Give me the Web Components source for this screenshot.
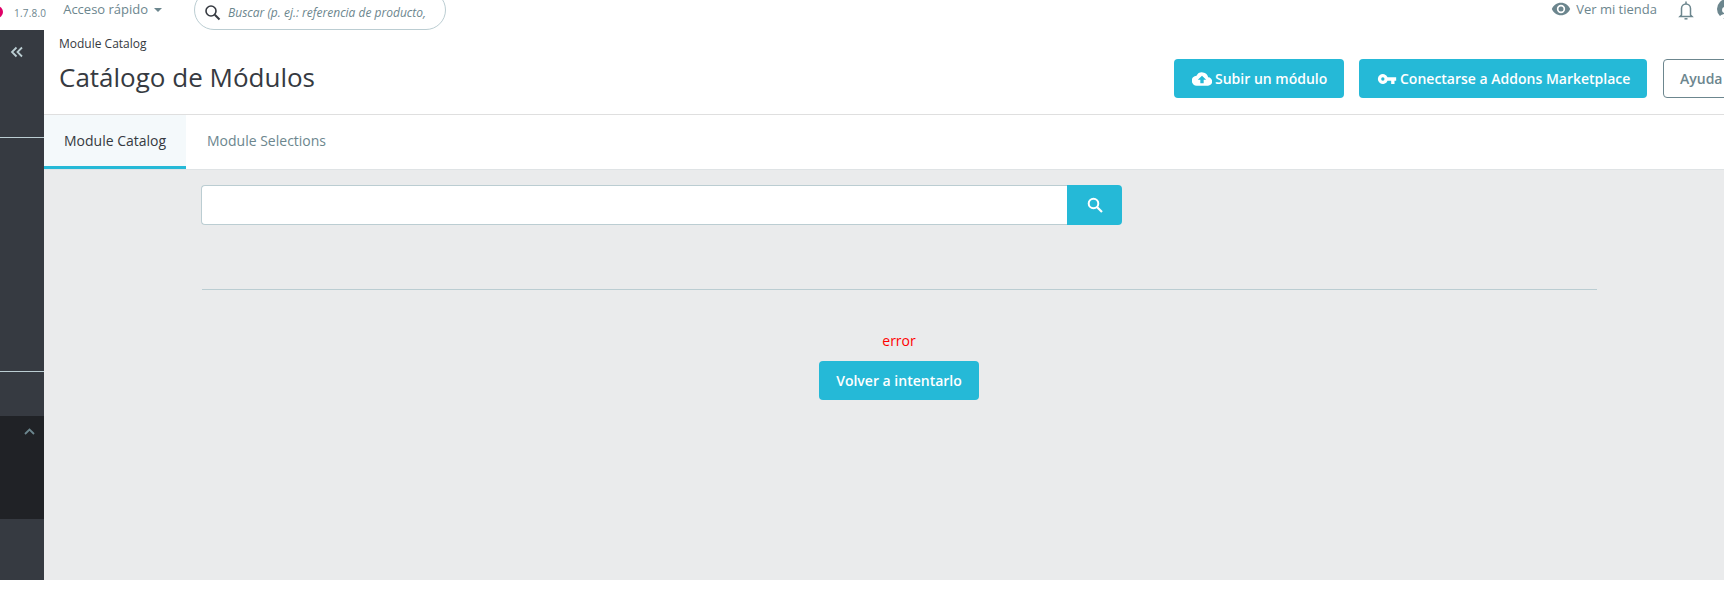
<!DOCTYPE html>
<html lang="es">
<head>
<meta charset="utf-8">
<title>Catálogo de Módulos</title>
<style>
  html, body { margin: 0; padding: 0; height: 600px; overflow: hidden; background: #fff; }
  body { font-family: "Open Sans", "Liberation Sans", sans-serif; color: #363a41; }
</style>
</head>
<body>
<bo-page>
  <bo-topbar slot="top"></bo-topbar>
  <bo-sidebar slot="side"></bo-sidebar>
  <bo-header></bo-header>
  <bo-tabs></bo-tabs>
  <bo-catalog></bo-catalog>
</bo-page>

<script>
// Shared primary button styles
const buttonCss = `
  .btn {
    display: inline-flex;
    align-items: center;
    justify-content: center;
    box-sizing: border-box;
    height: 39px;
    border: 0;
    border-radius: 4px;
    background: #25b9d7;
    color: #fff;
    font: 600 14px "Open Sans", sans-serif;
    white-space: nowrap;
  }
  .btn svg { display: block; fill: currentColor; flex: none; }
`;

class BoPage extends HTMLElement {
  constructor() {
    super();
    this.attachShadow({ mode: "open" });
    this.shadowRoot.innerHTML = `
      <style>
        :host { display: block; width: 1724px; height: 580px; }
        .layout { display: grid; grid-template-columns: 44px 1680px; grid-template-rows: 30px 550px; height: 580px; }
        .top { grid-column: 1 / 3; }
        .main { display: flex; flex-direction: column; min-width: 0; background: #eaebec; }
      </style>
      <div class="layout">
        <div class="top"><slot name="top"></slot></div>
        <slot name="side"></slot>
        <div class="main"><slot></slot></div>
      </div>
    `;
  }
}

class BoTopbar extends HTMLElement {
  constructor() {
    super();
    this.attachShadow({ mode: "open" });
    this.shadowRoot.innerHTML = `
      <style>
        :host { display: block; height: 30px; background: #fff; overflow: hidden; }
        .bar { display: flex; align-items: flex-start; height: 30px; }
        .logo { width: 12px; height: 12px; margin: 6px 0 0 -9px; border-radius: 50%; background: #df0067; flex: none; }
        .version { margin: 5px 0 0 11px; font-size: 10px; line-height: 16px; letter-spacing: .2px; color: #6c868e; white-space: nowrap; }
        .quick { display: flex; align-items: center; margin: 0 0 0 17px; font-size: 13px; line-height: 18px; color: #6c868e; white-space: nowrap; }
        .caret { width: 0; height: 0; margin: 2px 0 0 6px; border: 4px solid transparent; border-top-color: #6c868e; border-bottom: 0; }
        .search { display: flex; align-items: center; box-sizing: border-box; flex: none; width: 252px; height: 40px; margin: -10px 0 0 32px; padding: 5px 0 0 9px; border: 1px solid #bbcdd2; border-radius: 20px; }
        .search svg { flex: none; width: 17px; height: 17px; }
        .search span { margin-left: 7px; font-size: 12px; font-style: italic; color: #6c868e; white-space: nowrap; }
        .right { display: flex; align-items: flex-start; margin: 0 -13px 0 auto; }
        .shop { display: flex; align-items: center; height: 18px; font-size: 13px; color: #6c868e; white-space: nowrap; }
        .shop svg { width: 20px; height: 20px; margin-right: 5px; fill: #6c868e; }
        .bell { flex: none; width: 20px; height: 20px; margin: 0 0 0 19px; fill: none; stroke: #6c868e; stroke-width: 1.5; }
        .avatar { flex: none; display: block; width: 20px; height: 20px; margin: -1px 0 0 21px; }
      </style>
      <div class="bar">
        <div class="logo"></div>
        <div class="version">1.7.8.0</div>
        <div class="quick">Acceso rápido<span class="caret"></span></div>
        <div class="search">
          <svg viewBox="0 0 17 17"><circle cx="7" cy="7" r="5" fill="none" stroke="#363a41" stroke-width="1.6"/><path d="M10.800 10.800 15.500 15.500" stroke="#363a41" stroke-width="2"/></svg>
          <span>Buscar (p. ej.: referencia de producto,</span>
        </div>
        <div class="right">
          <div class="shop">
            <svg viewBox="0 0 24 24"><path d="M12 4.500C7 4.500 2.700 7.600 1 12c1.700 4.400 6 7.500 11 7.500s9.300-3.100 11-7.500c-1.700-4.400-6-7.500-11-7.500zM12 17a5 5 0 1 1 0-10 5 5 0 0 1 0 10zm0-8a3 3 0 1 0 0 6 3 3 0 0 0 0-6z"/></svg>
            Ver mi tienda
          </div>
          <svg class="bell" viewBox="0 0 20 20"><path d="M5.500 15V8.500a4.500 4.500 0 0 1 9 0V15l1.500 1.500H4z"/><path d="M8.500 18.800h3" /><path d="M10 1.500V4"/></svg>
          <svg class="avatar" viewBox="0 0 20 20"><circle cx="10" cy="10" r="10" fill="#6c868e"/><circle cx="8" cy="11" r="3" fill="#fff"/><path d="M2 19c1-3 4-4 6-4s5 1 6 4z" fill="#fff"/></svg>
        </div>
      </div>
    `;
  }
}

class BoSidebar extends HTMLElement {
  constructor() {
    super();
    this.attachShadow({ mode: "open" });
    this.shadowRoot.innerHTML = `
      <style>
        :host { display: block; background: #363a41; }
        .side { display: flex; flex-direction: column; height: 550px; box-sizing: border-box; }
        .collapse { height: 108px; padding: 16px 0 0 10px; box-sizing: border-box; border-bottom: 1px solid #bbcdd2; flex: none; }
        .collapse svg { display: block; width: 14px; height: 12px; }
        .block { height: 234px; box-sizing: border-box; border-bottom: 1px solid #bbcdd2; flex: none; }
        .gap { height: 44px; flex: none; }
        .dark { height: 103px; background: #202226; flex: none; padding: 12px 0 0 24px; box-sizing: border-box; }
        .dark svg { display: block; width: 11px; height: 7px; }
      </style>
      <div class="side">
        <div class="collapse">
          <svg viewBox="0 0 14 12" fill="none" stroke="#bbcdd2" stroke-width="1.8"><path d="M6.500 1.500 2 6l4.500 4.500M12 1.500 7.500 6l4.500 4.500"/></svg>
        </div>
        <div class="block"></div>
        <div class="gap"></div>
        <div class="dark">
          <svg viewBox="0 0 11 7" fill="none" stroke="#6c868e" stroke-width="1.8"><path d="M1 6 5.500 1.500 10 6"/></svg>
        </div>
      </div>
    `;
  }
}

class BoHeader extends HTMLElement {
  constructor() {
    super();
    this.attachShadow({ mode: "open" });
    this.shadowRoot.innerHTML = `
      <style>
        ${buttonCss}
        :host { display: block; flex: none; height: 85px; box-sizing: border-box; background: #fff; border-bottom: 1px solid #dfdfdf; }
        .wrap { display: flex; justify-content: space-between; align-items: flex-start; height: 84px; padding-left: 15px; }
        .crumb { margin-top: 6px; font-size: 12px; line-height: 16px; color: #363a41; white-space: nowrap; }
        h1 { margin: 7px 0 0; font-size: 26px; font-weight: 400; line-height: 36px; color: #363a41; white-space: nowrap; }
        .actions { display: flex; flex: none; margin: 29px -46px 0 0; }
        .upload { width: 170px; margin-right: 15px; justify-content: flex-start; padding-left: 18px; }
        .connect { width: 288px; margin-right: 16px; justify-content: flex-start; padding-left: 18px; }
        .upload span, .connect span { margin-left: 3px; }
        .help { width: 107px; background: #fff; color: #6c868e; border: 1px solid #6c868e; justify-content: flex-start; padding-left: 16px; }
      </style>
      <div class="wrap">
        <div>
          <div class="crumb">Module Catalog</div>
          <h1>Catálogo de Módulos</h1>
        </div>
        <div class="actions">
          <div class="btn upload">
            <svg width="20" height="20" viewBox="0 0 24 24"><path d="M19.400 10A7.500 7.500 0 0 0 5.400 8 6 6 0 0 0 6 20h13a5 5 0 0 0 .4-10zM14 13v4h-4v-4H7l5-5 5 5z"/></svg>
            <span>Subir un módulo</span>
          </div>
          <div class="btn connect">
            <svg width="20" height="20" viewBox="0 0 24 24"><path d="M12.650 10A6 6 0 1 0 12.650 14H17v4h4v-4h2v-4zM7 14a2 2 0 1 1 0-4 2 2 0 0 1 0 4z"/></svg>
            <span>Conectarse a Addons Marketplace</span>
          </div>
          <div class="btn help">Ayuda</div>
        </div>
      </div>
    `;
  }
}

class BoTabs extends HTMLElement {
  constructor() {
    super();
    this.attachShadow({ mode: "open" });
    this.shadowRoot.innerHTML = `
      <style>
        :host { display: block; flex: none; height: 55px; box-sizing: border-box; background: #fff; border-bottom: 1px solid #dfe3e5; }
        .tabs { display: flex; height: 54px; }
        .tab { display: flex; align-items: center; box-sizing: border-box; padding: 0 20px 0 21px; font-size: 14px; color: #6c868e; height: 54px; border-bottom: 3px solid transparent; white-space: nowrap; }
        .active { width: 142px; padding-left: 20px; background: #f4f9fb; color: #363a41; border-bottom-color: #25b9d7; }
      </style>
      <div class="tabs">
        <div class="tab active">Module Catalog</div>
        <div class="tab">Module Selections</div>
      </div>
    `;
  }
}

class BoCatalog extends HTMLElement {
  constructor() {
    super();
    this.attachShadow({ mode: "open" });
    this.shadowRoot.innerHTML = `
      <style>
        ${buttonCss}
        :host { display: block; flex: 1; background: #eaebec; padding: 15px 0 0 157px; box-sizing: border-box; }
        .search { display: flex; width: 921px; height: 40px; }
        .field { flex: 1; box-sizing: border-box; background: #fff; border: 1px solid #bbcdd2; border-right: 0; border-radius: 4px 0 0 4px; }
        .go { width: 55px; height: 40px; border-radius: 0 4px 4px 0; }
        hr { width: 1395px; height: 1px; margin: 64px 0 0 1px; border: 0; background: #bbcdd2; }
        .result { width: 1394px; margin-left: 1px; display: flex; flex-direction: column; align-items: center; }
        .error { margin-top: 41px; font-size: 14px; line-height: 19px; color: #f00; }
        .retry { width: 160px; margin-top: 11px; }
      </style>
      <div class="search">
        <div class="field"></div>
        <div class="btn go">
          <svg width="18" height="18" viewBox="0 0 18 18"><circle cx="7.500" cy="7.500" r="4.800" fill="none" stroke="#fff" stroke-width="2"/><path d="M11 11l5 5" stroke="#fff" stroke-width="2.200"/></svg>
        </div>
      </div>
      <hr>
      <div class="result">
        <div class="error">error</div>
        <div class="btn retry">Volver a intentarlo</div>
      </div>
    `;
  }
}

customElements.define("bo-page", BoPage);
customElements.define("bo-topbar", BoTopbar);
customElements.define("bo-sidebar", BoSidebar);
customElements.define("bo-header", BoHeader);
customElements.define("bo-tabs", BoTabs);
customElements.define("bo-catalog", BoCatalog);
</script>
</body>
</html>
